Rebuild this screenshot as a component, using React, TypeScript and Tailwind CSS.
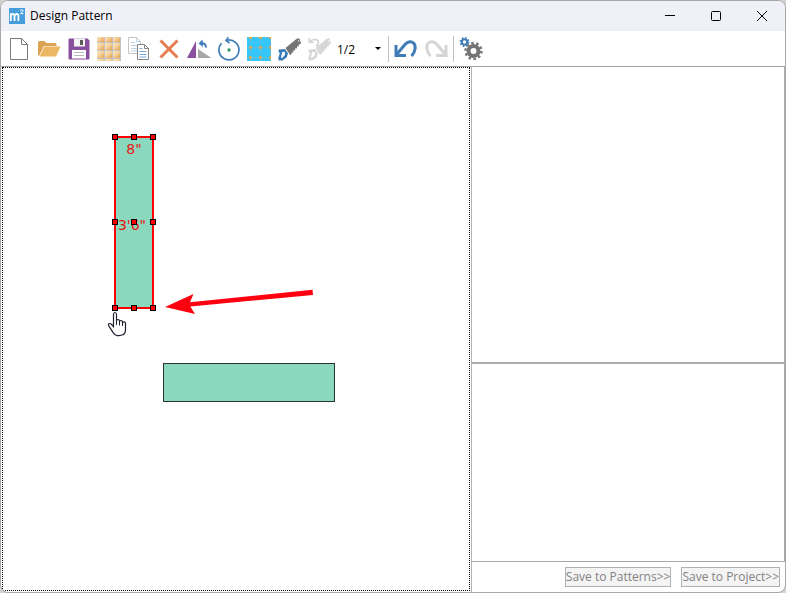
import type { ReactNode } from "react";

const HANDLES = [
  [112, 69], [131, 69], [150, 69],
  [112, 154], [131, 154], [150, 154],
  [112, 240], [131, 240], [150, 240],
];

function Icon({ children }: { children: ReactNode }) {
  return (
    <svg viewBox="0 0 24 24" className="size-6" fill="none" aria-hidden="true">
      {children}
    </svg>
  );
}

function Saw({ blade, handle }: { blade: string; handle: string }) {
  return (
    <>
      <path
        d="M8.500 11 20 1.500h2.500L24 6l-1 1.500-1.200-.3v2.300l-1.800-.3v2.300l-1.800-.3v2.300l-1.800-.3v2.300l-1.600-.2-.3 2-1.500.7-2.500-4Z"
        fill={blade}
      />
      <path d="M21.500 3 22 4.800" stroke="#fff" strokeWidth="0.8" />
      <path
        fillRule="evenodd"
        d="M2 12.500 8 12l3 4.200-1.200 4-4.300 3.300H1.800L1.200 21l1.600-4.500L1.300 14ZM5.200 15 4 20.800l1 .2 2.600-2.400.6-2.600-1-1.200Z"
        fill={handle}
      />
    </>
  );
}

const NewIcon = (
  <Icon>
    <path d="M3.500 1.500h11l6 6v15h-17Z" fill="#fff" stroke="#7b7b7b" />
    <path d="M14.500 1.500v6h6" stroke="#7b7b7b" />
  </Icon>
);

const OpenIcon = (
  <Icon>
    <path d="M1 5.500Q1 4 2.500 4h5l2 2H18q1.500 0 1.500 1.500V9H7L2 19q-1 0-1-1.500Z" fill="#dca452" />
    <path d="M7.500 9.500H23.500L19 19.500H2.500Z" fill="#ebb763" />
  </Icon>
);

const SaveIcon = (
  <Icon>
    <path d="M1.500 2.500q0-1 1-1h18l2 2v18q0 1-1 1h-19q-1 0-1-1Z" fill="#8950a0" />
    <path d="M7 1.500h11v8H7Z" fill="#f4f4f4" />
    <path d="M13 3h3v5h-3Z" fill="#5b5b5b" />
    <path d="M5 13h14v8.500H5Z" fill="#fff" />
    <path d="M7 15.500h10M7 18.500h10" stroke="#b8b8b8" />
  </Icon>
);

const TilesIcon = (
  <Icon>
    <defs>
      <linearGradient id="tile" x1="0" y1="0" x2="1" y2="1">
        <stop offset="0" stopColor="#fdecd2" />
        <stop offset="0.5" stopColor="#f3cd95" />
        <stop offset="1" stopColor="#e3a650" />
      </linearGradient>
    </defs>
    <path d="M0 0h24v24H0Z" fill="#c4c2be" />
    {[-2, 6, 14, 22].map((y) =>
      [0, 8, 16].map((x) => (
        <rect key={`${x}-${y}`} x={x} y={y} width="7" height="7" fill="url(#tile)" />
      )),
    )}
  </Icon>
);

const CopyIcon = (
  <Icon>
    <path d="M1.500.5h8l4 4v12h-12Z" fill="#fff" stroke="#c5c5c5" />
    <path d="M9.500.5v4h4M4 5.500h4M4 8.500h7M4 11.500h7M4 14h7" stroke="#b9d3e9" />
    <path d="M10.500 7.500h7l4 4v11h-11Z" fill="#fff" stroke="#858585" />
    <path d="M17.500 7.500v4h4" stroke="#858585" />
    <path d="M12.500 11.500h3M12.500 14.500h7M12.500 17.500h7M12.500 20h7" stroke="#7aa9d6" />
  </Icon>
);

const DeleteIcon = (
  <Icon>
    <path d="m3.500 3.500 17 17M20.500 3.500l-17 17" stroke="#e67c50" strokeWidth="3" />
  </Icon>
);

const MirrorIcon = (
  <Icon>
    <path d="M9 4v17H0Z" fill="#8950a0" />
    <path d="M11 12v9h13.500Z" fill="#a8a8a8" />
    <path d="M13 6.500c4-1 6 .5 6 4" stroke="#3f7cb8" strokeWidth="2" />
    <path d="m15.500 2.500-4 4 4.500 3.500Z" fill="#3f7cb8" />
  </Icon>
);

const RotateIcon = (
  <Icon>
    <path d="M9.500 3.200A10 10 0 1 1 4.500 6.200" stroke="#3f7cb8" strokeWidth="1.700" />
    <path d="M11.500.3 9 3.300l3.500 2.700" stroke="#3f7cb8" strokeWidth="1.600" />
    <circle cx="12" cy="13" r="1.700" fill="#389468" />
  </Icon>
);

const SnapIcon = (
  <Icon>
    <path d="M0 0h24v24H0Z" fill="#35c6fb" />
    <path d="M3.500 0v24M13.500 0v24M23.500 0v24M0 .5h24M0 10.500h24M0 20.500h24" stroke="#58bddb" />
    {[0, 10, 20].map((y) =>
      [3, 13, 23].map((x) => (
        <circle key={`${x}-${y}`} cx={x + 0.5} cy={y + 0.5} r="1.500" fill="#e9aa43" />
      )),
    )}
  </Icon>
);

const CutIcon = (
  <Icon>
    <Saw blade="#747474" handle="#397ab8" />
  </Icon>
);

const UncutIcon = (
  <Icon>
    <Saw blade="#d7d7d7" handle="#d7d7d7" />
    <path d="M2.500 4.500c4-3 8.500-2.500 9 .5.200 2-1 3-2.500 4" stroke="#d3d3d3" strokeWidth="1.600" />
    <path d="M2.200.8v4.400h4.600" stroke="#d3d3d3" strokeWidth="1.500" />
  </Icon>
);

function CurvedArrow({ color }: { color: string }) {
  return (
    <>
      <path d="M3 17 11 7.500c3-3.500 6.500-3.500 8.500-1.500 2.500 2.500 2.500 8-2 13" stroke={color} strokeWidth="3" />
      <path d="M2 8v10.500h10" stroke={color} strokeWidth="3" />
    </>
  );
}

const UndoIcon = (
  <Icon>
    <CurvedArrow color="#3f7cb8" />
  </Icon>
);

const RedoIcon = (
  <Icon>
    <g transform="matrix(-1 0 0 1 24 0)">
      <CurvedArrow color="#d5d5d5" />
    </g>
  </Icon>
);

const SettingsIcon = (
  <Icon>
    <circle cx="5.500" cy="5" r="2.700" stroke="#3f7cb8" strokeWidth="2" />
    <circle cx="5.500" cy="5" r="4.200" stroke="#3f7cb8" strokeWidth="1.600" strokeDasharray="1.650 1.650" />
    <circle cx="14.500" cy="14" r="5" stroke="#747474" strokeWidth="4" />
    <circle cx="14.500" cy="14" r="8" stroke="#747474" strokeWidth="2.400" strokeDasharray="2.500 2.527" />
  </Icon>
);

const EDIT_TOOLS = [
  { label: "New", icon: NewIcon },
  { label: "Open", icon: OpenIcon },
  { label: "Save", icon: SaveIcon },
  { label: "Tiles", icon: TilesIcon },
  { label: "Copy", icon: CopyIcon },
  { label: "Delete", icon: DeleteIcon },
  { label: "Mirror", icon: MirrorIcon },
  { label: "Rotate", icon: RotateIcon },
  { label: "Snap to grid", icon: SnapIcon },
  { label: "Cut", icon: CutIcon },
  { label: "Undo cut", icon: UncutIcon },
];

function ToolButton({ label, children }: { label: string; children: ReactNode }) {
  return (
    <button type="button" aria-label={label} className="flex h-7 w-[30px] items-center justify-center">
      {children}
    </button>
  );
}

function TitleBar() {
  return (
    <header className="flex h-[30px] items-center bg-[#f0f1f8] pl-2">
      <svg viewBox="0 0 16 16" className="size-4" aria-hidden="true">
        <path d="M0 0h16v16H0Z" fill="#459edb" />
        <path
          d="M1.800 13V5.200M1.800 7.500q.8-1.500 2-1.500 1.700 0 1.700 2v5M5.500 8q.8-2 2.200-2 1.700 0 1.700 2v5"
          fill="none"
          stroke="#fff"
          strokeWidth="1.800"
        />
        <path d="M11.300 3q.3-1.300 1.500-1.300 1.300 0 1.300 1.100 0 .8-2.600 2.800h2.900" fill="none" stroke="#fff" />
      </svg>
      <h1 className="ml-[5px] flex-1 text-[12px] leading-4">Design Pattern</h1>
      <button type="button" aria-label="Minimize" className="flex h-full w-[46px] items-center justify-center">
        <svg viewBox="0 0 10 10" className="size-[10px]" stroke="#000">
          <path d="M0 4.500h10" />
        </svg>
      </button>
      <button type="button" aria-label="Maximize" className="flex h-full w-[46px] items-center justify-center">
        <svg viewBox="0 0 10 10" className="size-[10px]" stroke="#000" fill="none">
          <rect x="0.500" y="0.500" width="9" height="9" rx="1" />
        </svg>
      </button>
      <button type="button" aria-label="Close" className="flex h-full w-[46px] items-center justify-center">
        <svg viewBox="0 0 10 10" className="size-[10px]" stroke="#000">
          <path d="m0 0 10 10M10 0 0 10" />
        </svg>
      </button>
    </header>
  );
}

function Toolbar() {
  return (
    <div role="toolbar" aria-label="Pattern tools" className="flex h-[35px] items-center pl-[3px]">
      {EDIT_TOOLS.map((tool) => (
        <ToolButton key={tool.label} label={tool.label}>
          {tool.icon}
        </ToolButton>
      ))}
      <div className="relative w-[54px]">
        <select aria-label="Grid size" defaultValue="1/2" className="h-6 w-full appearance-none pl-[3px] text-[12px]">
          <option>1/4</option>
          <option>1/2</option>
          <option>1</option>
        </select>
        <svg viewBox="0 0 6 3" className="pointer-events-none absolute top-[11px] right-[7px] h-[3px] w-[6px]">
          <path d="M0 0h6L3 3Z" />
        </svg>
      </div>
      <div className="mr-[2px] h-[26px] w-px bg-[#bdc1ca]" />
      <ToolButton label="Undo">{UndoIcon}</ToolButton>
      <ToolButton label="Redo">{RedoIcon}</ToolButton>
      <div className="mx-[2px] h-[26px] w-px bg-[#bdc1ca]" />
      <ToolButton label="Settings">{SettingsIcon}</ToolButton>
    </div>
  );
}

function PatternCanvas() {
  return (
    <section aria-label="Pattern canvas" className="relative mx-px mb-px border border-dotted border-black">
      <svg className="absolute inset-0 size-full">
        <rect x="112" y="69" width="38" height="171" fill="#8ad8bd" stroke="#ff0000" strokeWidth="2" />
        <g fill="#e81414" fontSize="14" textAnchor="middle" className="font-['DejaVu_Sans',sans-serif]">
          <text x="131" y="86">8"</text>
          <text x="129" y="162">3'6"</text>
        </g>
        {HANDLES.map(([x, y]) => (
          <rect key={`${x}-${y}`} x={x - 2.5} y={y - 2.5} width="5" height="5" fill="#ff0000" stroke="#000" />
        ))}

        <rect x="160.500" y="295.500" width="171" height="38" fill="#8ad8bd" stroke="#26362f" />

        <path d="M162 239 190.500 226 187 234.300 309.500 221.700 310 227 187.300 238.500 192 246Z" fill="#ff0010" />

        {/* hand pointer */}
        <path
          d="M110.500 246.500q0-2 1.500-2t1.500 2v6.500q0-1.500 1.500-1.500t1.500 1.500v1q0-1.500 1.500-1.500t1.500 1.500v1q0-1.200 1.500-1.200t1.500 1.500v6q0 4.200-2.300 5.300-2.500 1.400-6 1-2.500-.3-4-3l-4.300-6.500q-1-1.500 0-2.300t2.500.5l2.100 2.300Z"
          fill="#fff"
          stroke="#1e2030"
          strokeWidth="1.200"
        />
        <path d="M113.500 253v4M116.500 254v3.500M119.500 255v3" stroke="#1e2030" />
      </svg>
    </section>
  );
}

function SidePanel() {
  return (
    <aside className="flex flex-col border-l border-[#b2b2b2]">
      <div className="flex-[3] border-r border-b-2 border-[#ababb0]" />
      <div className="flex-[2] border-r border-b border-[#a5a8ad]" />
      <div className="flex h-[30px] items-center justify-end gap-[10px] pr-[5px] text-[12px] leading-4 text-[#838383]">
        <button type="button" disabled className="h-5 border border-[#adb2b5] bg-[#f4f4f4]">
          Save to Patterns&gt;&gt;
        </button>
        <button type="button" disabled className="h-5 border border-[#adb2b5] bg-[#f4f4f4]">
          Save to Project&gt;&gt;
        </button>
      </div>
    </aside>
  );
}

export default function App() {
  return (
    <div className="h-screen bg-[#d2d2d2]">
      <div className="flex h-full flex-col overflow-hidden rounded-lg border border-[#a8a8a8] bg-white font-['Open_Sans','Noto_Sans',sans-serif] text-black">
        <TitleBar />
        <Toolbar />
        <main className="grid flex-1 grid-cols-[3fr_2fr] border-t border-[#a0a0a0]">
          <PatternCanvas />
          <SidePanel />
        </main>
      </div>
    </div>
  );
}
